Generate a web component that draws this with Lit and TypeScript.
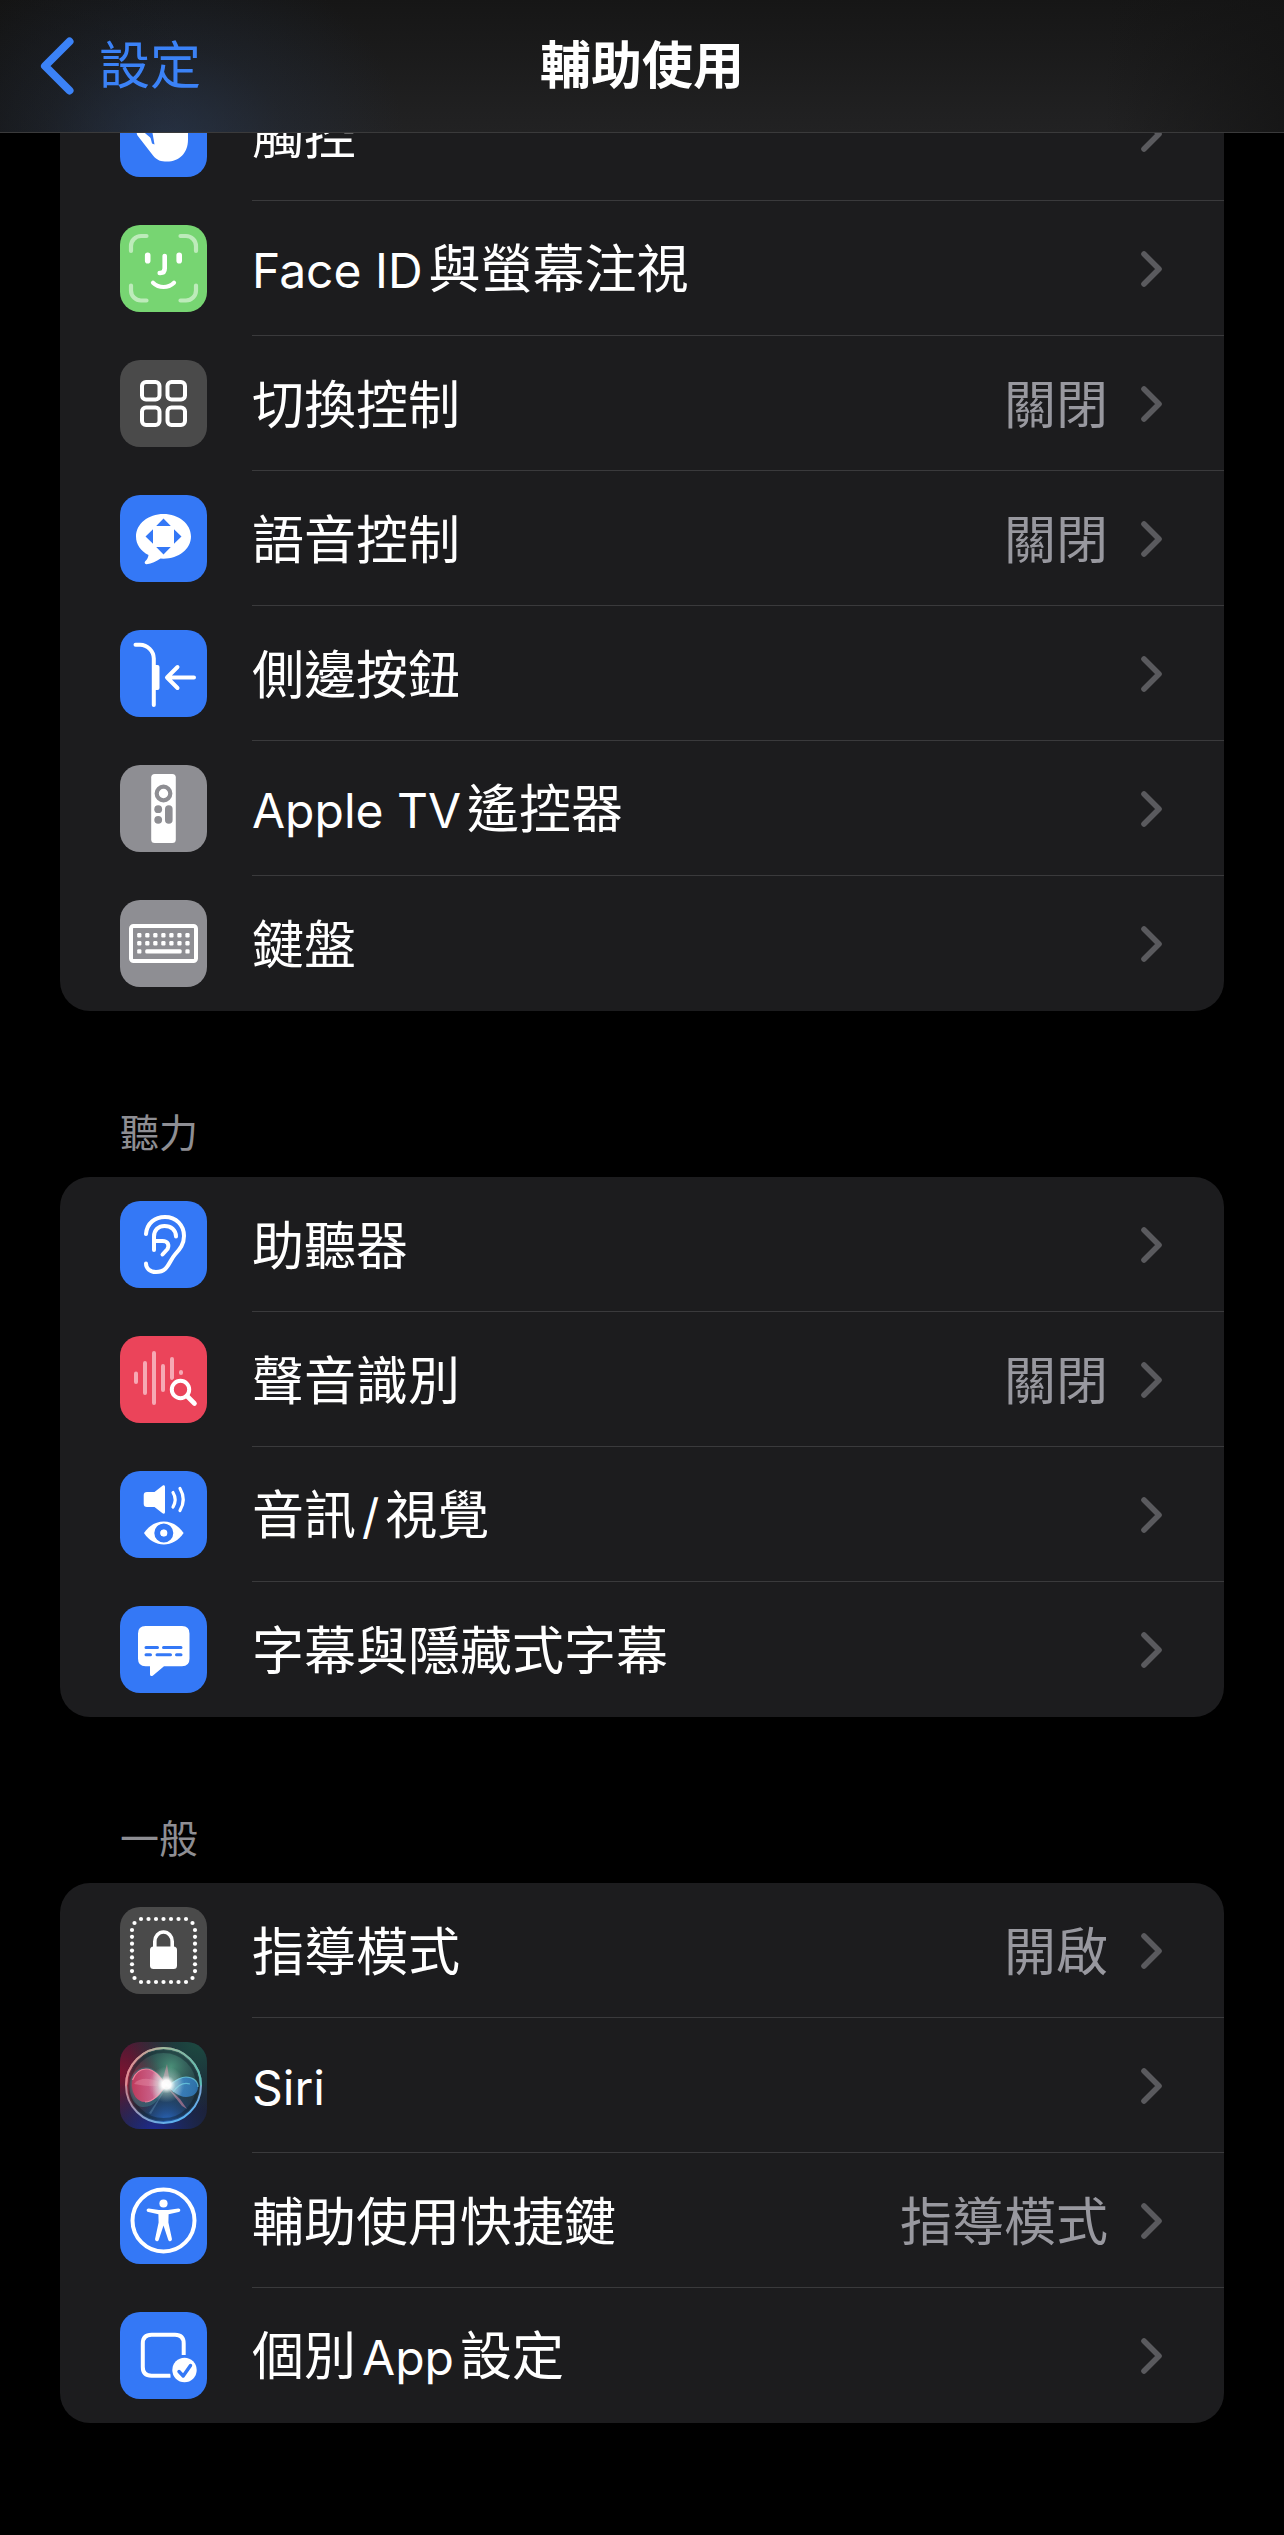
import { LitElement, html, svg, css, nothing } from "lit";
import { customElement, property } from "lit/decorators.js";

type IconName =
  | "touch" | "faceid" | "switch" | "voice" | "side" | "remote" | "keyboard"
  | "ear" | "sound" | "audiovisual" | "captions"
  | "guided" | "siri" | "accessibility" | "perapp";

interface Row { icon: IconName; label: string; value?: string; }
interface Group { title?: string; rows: Row[]; }

const GROUPS: Group[] = [
  {
    rows: [
      { icon: "touch", label: "觸控" },
      { icon: "faceid", label: "Face ID與螢幕注視" },
      { icon: "switch", label: "切換控制", value: "關閉" },
      { icon: "voice", label: "語音控制", value: "關閉" },
      { icon: "side", label: "側邊按鈕" },
      { icon: "remote", label: "Apple TV遙控器" },
      { icon: "keyboard", label: "鍵盤" },
    ],
  },
  {
    title: "聽力",
    rows: [
      { icon: "ear", label: "助聽器" },
      { icon: "sound", label: "聲音識別", value: "關閉" },
      { icon: "audiovisual", label: "音訊/視覺" },
      { icon: "captions", label: "字幕與隱藏式字幕" },
    ],
  },
  {
    title: "一般",
    rows: [
      { icon: "guided", label: "指導模式", value: "開啟" },
      { icon: "siri", label: "Siri" },
      { icon: "accessibility", label: "輔助使用快捷鍵", value: "指導模式" },
      { icon: "perapp", label: "個別App設定" },
    ],
  },
];

const BLUE = "#3478f6";
const GRAY = "#8e8e93";
const DARK = "#4a4a4a";

const TILE: Record<IconName, string> = {
  touch: BLUE, faceid: "#77d572", switch: DARK, voice: BLUE, side: BLUE,
  remote: GRAY, keyboard: GRAY, ear: BLUE, sound: "#eb445a", audiovisual: BLUE,
  captions: BLUE, guided: DARK, siri: "#1d2138", accessibility: BLUE, perapp: BLUE,
};

const range = (n: number) => Array.from({ length: n }, (_, i) => i);

// Every glyph is drawn on an 87 x 87 tile.
const GLYPH: Record<IconName, () => unknown> = {
  touch: () => svg`
    <path fill="#fff" d="M32 20v29L22.500 41c-3-2.500-7.500.5-5 4.500l15.500 20c4 5 8 6 14 6 12 0 21-8 21-22V20z"/>
    <path fill="#3478f6" d="M28.500 40h3.500l2.500 14.500-2.500-1z"/>`,
  faceid: () => svg`
    <g fill="none" stroke-linecap="round">
      <g stroke="#bdebba" stroke-width="4.200">
        <path d="M11 26v-5a10 10 0 0 1 10-10h5.500M60.500 11H66a10 10 0 0 1 10 10v5M76 60.500v5a10 10 0 0 1-10 10h-5.500M26.500 75.500H21a10 10 0 0 1-10-10v-5"/>
      </g>
      <g stroke="#fff">
        <path stroke-width="5.600" d="M27.700 30.200v5.600M59.200 30.200v5.600"/>
        <path stroke-width="4.600" d="M44.700 31v12.500q0 4.500-4.500 4.500h-.5"/>
        <path stroke-width="4.200" d="M33 57.700q4.500 4.300 10.500 4.300t10.500-4.300"/>
      </g>
    </g>`,
  switch: () => svg`
    <g fill="none" stroke="#fff" stroke-width="4">
      <rect x="22" y="22" width="17.500" height="17.500" rx="4"/>
      <rect x="47.500" y="22" width="17.500" height="17.500" rx="4"/>
      <rect x="22" y="47.500" width="17.500" height="17.500" rx="4"/>
      <rect x="47.500" y="47.500" width="17.500" height="17.500" rx="4"/>
    </g>`,
  voice: () => svg`
    <path fill="#fff" d="M43.500 19C28.300 19 16 28.800 16 41.500c0 8 4.700 14.500 12.500 18.500-.3 2.500-1.500 4.500-3.300 6.300-1.200 1.300-.2 3 1.500 2.900 5-.4 9.600-2.700 13.800-5.700l3 .2C58.700 63.700 71 54.200 71 41.500S58.700 19 43.500 19z"/>
    <path fill="#3478f6" d="M43.500 23.500l7.300 7.500H36.200zM43.500 59.500l7.300-7.500H36.200zM25.500 41.500l7.500-7.300v14.600zM61.500 41.500l-7.500-7.300v14.600z"/>`,
  side: () => svg`
    <g fill="none" stroke="#fff" stroke-linecap="round" stroke-linejoin="round" stroke-width="4">
      <path d="M15.500 14.800H20A14 14 0 0 1 33.800 28.500V75"/>
      <path d="M74 47.500H47.500M57.500 37L47 47.500 57.500 58"/>
    </g>
    <path fill="#fff" d="M34 35h3.500q2 0 2 2v21q0 2-2 2H34z"/>`,
  remote: () => svg`
    <rect x="31.200" y="9" width="24.600" height="69" rx="3.500" fill="#fff"/>
    <circle cx="43.500" cy="28.500" r="6.800" fill="none" stroke="#8e8e93" stroke-width="4.200"/>
    <g fill="#8e8e93">
      <circle cx="38.200" cy="44.200" r="3.900"/>
      <circle cx="38.200" cy="54.800" r="3.900"/>
      <rect x="45" y="40.300" width="7.600" height="18.500" rx="3.800"/>
    </g>`,
  keyboard: () => svg`
    <rect x="11" y="26" width="65" height="35" rx="2.500" fill="none" stroke="#fff" stroke-width="4"/>
    <g fill="#fff">
      ${range(7).map((i) => svg`
        <rect x=${17.2 + i * 8.03} y="33" width="4.200" height="4.400" rx="1.200"/>
        <rect x=${17.2 + i * 8.03} y="41.100" width="4.200" height="4.400" rx="1.200"/>`)}
      <rect x="17.200" y="49.200" width="4.200" height="4.400" rx="1.200"/>
      <rect x="25.200" y="49.200" width="36.500" height="4.400" rx="1.500"/>
      <rect x="65.400" y="49.200" width="4.200" height="4.400" rx="1.200"/>
    </g>`,
  ear: () => svg`
    <g fill="none" stroke="#fff" stroke-width="4" stroke-linecap="round" stroke-linejoin="round">
      <path d="M26 33C27 22 35 16 45 16c11 0 19 8 19 19 0 8-4 13-9 18.500C49 60 48.500 71 36 71c-6.500 0-10-4-10-8.500"/>
      <path d="M34 49V35.500C34 29 38.500 25 44.500 25 51 25 56 29 56 35.500"/>
      <path d="M34 40h8.500c5.500 0 7 4 5 8l-5 5.500"/>
    </g>`,
  sound: () => svg`
    <g stroke="#f6a9b4" stroke-width="4" stroke-linecap="round">
      <path d="M16 37.500v8.500M25 27v30M34 17v50M43 30v24M52 23v19M61 36v1"/>
    </g>
    <g fill="none" stroke-linecap="round">
      <circle cx="60.500" cy="53.500" r="12.500" fill="#eb445a"/>
      <circle cx="60.500" cy="53.500" r="8.700" stroke="#fff" stroke-width="4"/>
      <path stroke="#fff" stroke-width="4.600" d="M67 60l7.500 7.500"/>
    </g>`,
  audiovisual: () => svg`
    <path fill="#fff" d="M27 21h7.500l8-6.300c1.200-1 2.500-.4 2.500 1.300v25c0 1.700-1.300 2.300-2.500 1.300L34.500 36H27q-3.300 0-3.300-3.300v-8.400Q23.700 21 27 21z"/>
    <g fill="none" stroke="#fff" stroke-width="3.200" stroke-linecap="round">
      <path d="M53 21.500q4.300 7 0 14.500M60 17.500q6.500 11 0 22"/>
    </g>
    <path fill="#fff" d="M24 62C29 54.500 36 50.500 43.800 50.500S58.500 54.500 63.600 62C58.500 69.500 51.500 73.500 43.800 73.500S29 69.500 24 62z"/>
    <circle cx="43.800" cy="62" r="6.500" fill="#fff" stroke="#3478f6" stroke-width="6"/>
    <circle cx="43.800" cy="62" r="3.300" fill="#fff"/>`,
  captions: () => svg`
    <path fill="#fff" d="M25.500 20H62q7.500 0 7.500 7.500v25.300q0 7.500-7.500 7.500H44L33 69.500c-1.500 1.200-3 .6-3-1.200v-8h-4.500q-7.500 0-7.500-7.500V27.500Q18 20 25.500 20z"/>
    <g stroke="#3478f6" stroke-width="3" stroke-linecap="round">
      <path d="M26 41.500h11.500M43.500 41.500h17.500M26 48.800h4.500M37 48.800h13.500M56.500 48.800h4.500"/>
    </g>`,
  guided: () => svg`
    <g fill="#fff">
      ${range(7).map((i) => svg`
        <circle cx=${21 + i * 7.5} cy="12" r="2.100"/>
        <circle cx=${21 + i * 7.5} cy="75" r="2.100"/>
        <circle cx="12" cy=${23 + i * 6.85} r="2.100"/>
        <circle cx="75" cy=${23 + i * 6.85} r="2.100"/>`)}
      <circle cx="14.500" cy="16" r="2.100"/><circle cx="72.500" cy="16" r="2.100"/>
      <circle cx="14.500" cy="71" r="2.100"/><circle cx="72.500" cy="71" r="2.100"/>
      <rect x="30" y="39.500" width="27" height="22.500" rx="3.500"/>
    </g>
    <path fill="none" stroke="#fff" stroke-width="3.600" d="M34.800 41v-6.500a8.700 9.500 0 0 1 17.400 0V41"/>`,
  siri: () => svg`
    <defs>
      <radialGradient id="sr" cx="0" cy=".35" r=".75"><stop offset="0" stop-color="#7a1430"/><stop offset="1" stop-color="#7a1430" stop-opacity="0"/></radialGradient>
      <radialGradient id="sg" cx=".9" cy="0" r=".8"><stop offset="0" stop-color="#1c4a40"/><stop offset="1" stop-color="#1c4a40" stop-opacity="0"/></radialGradient>
      <radialGradient id="sb" cx=".4" cy="1.050" r=".7"><stop offset="0" stop-color="#1f2a96"/><stop offset="1" stop-color="#16305a" stop-opacity="0"/></radialGradient>
      <linearGradient id="sl" x1=".1" y1="0" x2=".7" y2="1"><stop offset="0" stop-color="#e08a92"/><stop offset=".45" stop-color="#b98a9c"/><stop offset="1" stop-color="#56b4f5"/></linearGradient>
      <linearGradient id="st" x1="0" y1="0" x2="1" y2="0"><stop offset="0" stop-color="#e88a92"/><stop offset=".5" stop-color="#8fc9a0"/><stop offset="1" stop-color="#4fc7b0"/></linearGradient>
      <radialGradient id="so" cx=".6" cy=".25" r=".65"><stop offset="0" stop-color="#4a8f78"/><stop offset="1" stop-color="#1d4347" stop-opacity="0"/></radialGradient>
      <radialGradient id="su" cx=".55" cy="1" r=".55"><stop offset="0" stop-color="#2a6cc8"/><stop offset="1" stop-color="#14305e" stop-opacity="0"/></radialGradient>
      <radialGradient id="sx" cx="0" cy=".45" r=".5"><stop offset="0" stop-color="#b8324a"/><stop offset="1" stop-color="#7a2038" stop-opacity="0"/></radialGradient>
      <radialGradient id="sw"><stop offset="0" stop-color="#fff"/><stop offset=".25" stop-color="#fff" stop-opacity=".95"/><stop offset=".5" stop-color="#cfeee8" stop-opacity=".4"/><stop offset="1" stop-color="#cfeee8" stop-opacity="0"/></radialGradient>
      <linearGradient id="sp" x1="0" y1="0" x2="1" y2="0"><stop offset="0" stop-color="#c9385c"/><stop offset=".6" stop-color="#d9608c"/><stop offset="1" stop-color="#fff"/></linearGradient>
      <linearGradient id="sc" x1="0" y1="0" x2="1" y2="0"><stop offset="0" stop-color="#d9f4ff"/><stop offset=".5" stop-color="#3f8fd8"/><stop offset="1" stop-color="#2f7fc8"/></linearGradient>
    </defs>
    <rect width="87" height="87" fill="url(#sr)"/>
    <rect width="87" height="87" fill="url(#sg)"/>
    <rect width="87" height="87" fill="url(#sb)"/>
    <circle cx="43.500" cy="43.500" r="37.500" fill="#24323e"/>
    <circle cx="43.500" cy="43.500" r="37.500" fill="url(#so)"/>
    <circle cx="43.500" cy="43.500" r="37.500" fill="url(#su)"/>
    <circle cx="43.500" cy="43.500" r="37.500" fill="url(#sx)"/>
    <circle cx="43.500" cy="43.500" r="34" fill="none" stroke="#0c1c26" stroke-width="3" opacity=".4"/>
    <path fill="#3f8791" opacity=".45" d="M13 32c10-12 24-8 33 11-4 12-12 23-24 22C10 63 6 42 13 32z"/>
    <path fill="url(#sp)" opacity=".9" d="M12 43C12 33 18 27 26 27c9 0 15 9 20 16-5 8-12 17-21 17-8 0-13-8-13-17z"/>
    <path fill="#f2a0b4" opacity=".35" d="M14 42c6-8 20-6 32 1-12 2-22 1-32-1z"/>
    <path fill="none" stroke="#ff8ea6" stroke-width="1.200" opacity=".8" d="M12.500 38C16 29 21 27 26 27c9 0 15 9 20 16-5 8-12 17-21 17"/>
    <path fill="url(#sc)" opacity=".75" d="M46 44c7-4 12-9 20-9 7 0 12 4 12 10s-5 10-12 10c-8 0-14-7-20-11z"/>
    <path fill="none" stroke="#6fd4e6" stroke-width="1.200" opacity=".7" d="M50 43c6-5 11-8 16-8 7 0 12 4 12 10M53 50c5-7 11-10 17-8"/>
    <path fill="#7fb4d8" opacity=".3" d="M46 46L31 72l-2-1z"/>
    <path fill="#e08aa4" opacity=".55" d="M47 45l13 12 7 10-5-3zM42 40l5-18 3 20z"/>
    <circle cx="46.500" cy="42.500" r="18" fill="url(#sw)"/>
    <circle cx="43.500" cy="43.500" r="37.500" fill="none" stroke="url(#sl)" stroke-width="2"/>
    <path fill="none" stroke="url(#st)" stroke-width="2" opacity=".8" d="M6 43.500a37.500 37.500 0 0 1 75 0"/>`,
  accessibility: () => svg`
    <circle cx="43.500" cy="43.500" r="31" fill="none" stroke="#fff" stroke-width="4"/>
    <circle cx="43.500" cy="26.500" r="4.100" fill="#fff"/>
    <path fill="#fff" d="M28.800 31.500L39 33h9l10.200-1.500c2.500-.3 2.900 3 .5 3.600L48.600 37.200l-.2 8.300 3.500 16.200c.5 2.700-2.800 3.500-3.700 1L43.500 48.500 38.800 62.700c-.9 2.500-4.200 1.700-3.700-1l3.500-16.200-.2-8.300-10.100-2.100c-2.400-.6-2-3.900.5-3.600z"/>`,
  perapp: () => svg`
    <path fill="none" stroke="#fff" stroke-width="4" d="M50.500 63.800H31.500q-8.700 0-8.700-8.700V31.500q0-8.700 8.700-8.700H55q8.700 0 8.700 8.700V43"/>
    <circle cx="64.500" cy="58" r="14.500" fill="#3478f6"/>
    <circle cx="64.500" cy="58" r="12.200" fill="#fff"/>
    <path fill="none" stroke="#3478f6" stroke-width="3.400" stroke-linecap="round" stroke-linejoin="round" d="M59 59.500l4.200 4.500 7.300-10.500"/>`,
};

@customElement("setting-icon")
export class SettingIcon extends LitElement {
  @property() name: IconName = "touch";

  static styles = css`
    :host { display: block; flex: none; }
    .tile { display: block; width: 87px; height: 87px; border-radius: 20px; }
  `;

  render() {
    return html`<svg class="tile" viewBox="0 0 87 87" aria-hidden="true">
      <rect width="87" height="87" fill=${TILE[this.name]}></rect>
      ${GLYPH[this.name]()}
    </svg>`;
  }
}

// Sets the Latin runs of a label apart from the Chinese ones.
const mixedScript = (text: string) =>
  text
    .split(/([A-Za-z/][A-Za-z ]*)/)
    .filter((part) => part !== "")
    .map((part) => (/^[A-Za-z/]/.test(part) ? html`<span class="latin">${part}</span>` : part));

@customElement("setting-row")
export class SettingRow extends LitElement {
  @property() icon: IconName = "touch";
  @property() label = "";
  @property() value = "";

  static styles = css`
    :host { display: block; }
    .row {
      display: flex;
      align-items: center;
      gap: 45px;
      min-height: 135px;
      padding-left: 60px;
      color: #fff;
      text-decoration: none;
    }
    .body {
      flex: 1;
      align-self: stretch;
      display: flex;
      align-items: center;
      min-width: 0;
      padding-right: 62px;
    }
    :host(:not([last])) .body { box-shadow: inset 0 -1px #3a3a3c; }
    .label, .value { padding-top: 4px; font-size: 52px; }
    .label { flex: 1; min-width: 0; }
    .latin { margin-inline: 6px; font-size: 48px; }
    .latin:first-child:not(:last-child), .latin:only-child { margin-inline-end: 6px; }
    .label.latin-first .latin { margin-inline-start: 0; }
    .value { color: #98989f; }
    .chevron { flex: none; width: 21px; height: 36px; margin-left: 33px; }
  `;

  render() {
    const latinFirst = /^[A-Za-z]/.test(this.label);
    return html`<a class="row" href="#${this.icon}">
      <setting-icon .name=${this.icon}></setting-icon>
      <span class="body">
        <span class="label ${latinFirst ? "latin-first" : ""}">${mixedScript(this.label)}</span>
        ${this.value ? html`<span class="value">${this.value}</span>` : nothing}
        <svg class="chevron" viewBox="0 0 21 36" aria-hidden="true">
          <path d="M3 3L18 18 3 33" fill="none" stroke="#5a5a5e" stroke-width="5.600" stroke-linecap="round" stroke-linejoin="round"></path>
        </svg>
      </span>
    </a>`;
  }
}

@customElement("app-root")
export class AppRoot extends LitElement {
  static styles = css`
    :host {
      display: block;
      min-height: 100vh;
      background: #000;
      color: #fff;
      font-family: Inter, "Noto Sans CJK TC", sans-serif;
      font-size: 51px;
      line-height: 60px;
    }
    .bar {
      position: sticky;
      top: 0;
      z-index: 1;
      display: grid;
      grid-template-columns: 1fr auto 1fr;
      align-items: center;
      height: 132px;
      padding: 0 40px;
      border-bottom: 1px solid #3a3a3b;
      background:
        radial-gradient(ellipse 240px 190px at 165px 140px, rgba(42, 66, 104, 0.45), rgba(42, 66, 104, 0.16) 50%, transparent),
        linear-gradient(90deg, rgba(20, 20, 20, 0.8), transparent 14%, transparent 86%, rgba(20, 20, 20, 0.8)),
        linear-gradient(#161616, #222223);
    }
    .back {
      justify-self: start;
      display: flex;
      align-items: center;
      gap: 25px;
      color: #3b82f7;
      text-decoration: none;
    }
    .back-icon { width: 34px; height: 58px; }
    .title { margin: 0; font-size: 51px; font-weight: 700; }
    .list { padding: 0 60px 112px; }
    .group { margin: 0; }
    .card {
      margin: 0;
      padding: 0;
      list-style: none;
      overflow: hidden;
      border-radius: 30px;
      background: #1c1c1e;
    }
    .group:first-child { margin-top: -67px; }
    .heading {
      margin: 0;
      padding: 98px 60px 20px;
      color: #8e8e93;
      font-size: 39px;
      font-weight: 400;
      line-height: 48px;
    }
  `;

  render() {
    return html`
      <header class="bar">
        <a class="back" href="#settings">
          <svg class="back-icon" viewBox="0 0 34 58" aria-hidden="true">
            <path d="M29.500 4.500L5 29 29.500 53.500" fill="none" stroke="#3b82f7" stroke-width="8" stroke-linecap="round" stroke-linejoin="round"></path>
          </svg>
          <span>設定</span>
        </a>
        <h1 class="title">輔助使用</h1>
      </header>
      <main class="list">
        ${GROUPS.map((g) => html`
          <section class="group">
            ${g.title ? html`<h2 class="heading">${g.title}</h2>` : nothing}
            <ul class="card">
              ${g.rows.map((r, i) => html`<li>
                <setting-row .icon=${r.icon} .label=${r.label} .value=${r.value ?? ""} ?last=${i === g.rows.length - 1}></setting-row>
              </li>`)}
            </ul>
          </section>`)}
      </main>`;
  }
}
